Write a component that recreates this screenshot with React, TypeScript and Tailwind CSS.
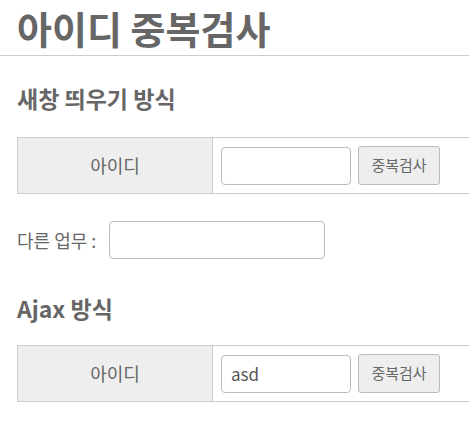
import React from 'react';

const font = { fontFamily: '"Noto Sans CJK KR", "Noto Sans", sans-serif' };

const CheckRow: React.FC<{ value?: string }> = ({ value }) => (
  <table className="w-[520px] border-collapse border-y border-[#cccccc]">
    <tbody>
      <tr>
        <th className="w-[195px] h-[56px] bg-[#eeeeee] border-l border-r border-[#cccccc] text-[18px] font-normal text-[#666666]">
          아이디
        </th>
        <td className="pl-[8px]">
          <div className="flex items-center gap-[7px]">
            <input
              type="text"
              defaultValue={value}
              className="w-[130px] h-[38px] border border-[#bbbbbb] rounded-[4px] px-[9px] text-[17px] text-[#555555] outline-none"
            />
            <button
              type="button"
              className="w-[82px] h-[39px] bg-[#eeeeee] border border-[#bbbbbb] rounded-[3px] text-[15px] text-[#666666]"
            >
              중복검사
            </button>
          </div>
        </td>
      </tr>
    </tbody>
  </table>
);

export default function App() {
  return (
    <div className="w-[469px] h-[424px] overflow-hidden bg-white text-[#666666]" style={font}>
      <h1 className="px-[17px] text-[38px] leading-[55px] font-bold border-b border-[#cccccc]">
        아이디 중복검사
      </h1>
      <div className="pl-[17px]">
        <h3 className="mt-[27px] text-[23px] leading-[30px] font-bold">새창 띄우기 방식</h3>
        <div className="mt-[24px]">
          <CheckRow />
        </div>
        <div className="mt-[27px] flex items-center gap-[6px]">
          <span className="text-[18px] w-[86px] whitespace-nowrap">다른 업무 :</span>
          <input
            type="text"
            className="w-[216px] h-[38px] border border-[#bbbbbb] rounded-[4px] px-[10px] outline-none"
          />
        </div>
        <h3 className="mt-[34px] text-[23px] leading-[30px] font-bold">Ajax 방식</h3>
        <div className="mt-[22px]">
          <CheckRow value="asd" />
        </div>
      </div>
    </div>
  );
}
